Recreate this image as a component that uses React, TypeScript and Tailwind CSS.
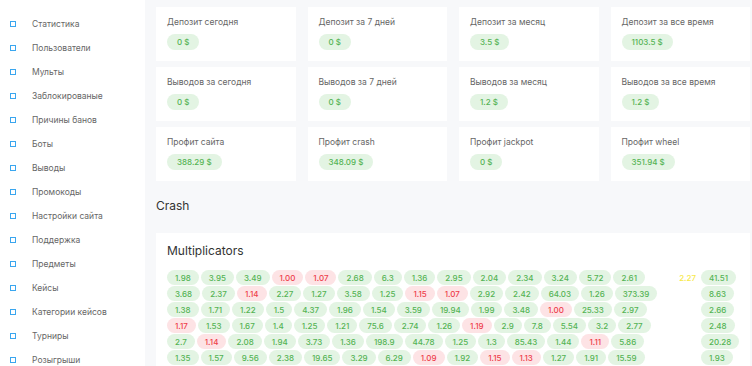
const menu = [
  "Статистика",
  "Пользователи",
  "Мульты",
  "Заблокированые",
  "Причины банов",
  "Боты",
  "Выводы",
  "Промокоды",
  "Настройки сайта",
  "Поддержка",
  "Предметы",
  "Кейсы",
  "Категории кейсов",
  "Турниры",
  "Розыгрыши",
];

const stats = [
  { label: "Депозит сегодня", value: "0 $" },
  { label: "Депозит за 7 дней", value: "0 $" },
  { label: "Депозит за месяц", value: "3.5 $" },
  { label: "Депозит за все время", value: "1103.5 $" },
  { label: "Выводов за сегодня", value: "0 $" },
  { label: "Выводов за 7 дней", value: "0 $" },
  { label: "Выводов за месяц", value: "1.2 $" },
  { label: "Выводов за все время", value: "1.2 $" },
  { label: "Профит сайта", value: "388.29 $" },
  { label: "Профит crash", value: "348.09 $" },
  { label: "Профит jackpot", value: "0 $" },
  { label: "Профит wheel", value: "351.94 $" },
];

// строки множителей, последний элемент идёт в правую колонку
const rows: string[][] = [
  ["1.98", "3.95", "3.49", "1.00", "1.07", "2.68", "6.3", "1.36", "2.95", "2.04", "2.34", "3.24", "5.72", "2.61", "41.51"],
  ["3.68", "2.37", "1.14", "2.27", "1.27", "3.58", "1.25", "1.15", "1.07", "2.92", "2.42", "64.03", "1.26", "373.39", "8.63"],
  ["1.38", "1.71", "1.22", "1.5", "4.37", "1.96", "1.54", "3.59", "19.94", "1.99", "3.48", "1.00", "25.33", "2.97", "2.66"],
  ["1.17", "1.53", "1.67", "1.4", "1.25", "1.21", "75.6", "2.74", "1.26", "1.19", "2.9", "7.8", "5.54", "3.2", "2.77", "2.48"],
  ["2.7", "1.14", "2.08", "1.94", "3.73", "1.36", "198.9", "44.78", "1.25", "1.3", "85.43", "1.44", "1.11", "5.86", "20.28"],
  ["1.35", "1.57", "9.56", "2.38", "19.65", "3.29", "6.29", "1.09", "1.92", "1.15", "1.13", "1.27", "1.91", "15.59", "1.93"],
];

function Badge({ value }: { value: string }) {
  const low = parseFloat(value) < 1.2;
  return (
    <span
      className={`h-[15px] px-[8px] rounded-full flex items-center text-[8px] font-medium leading-none ${
        low ? "bg-[#fde3e5] text-[#ee3d4b]" : "bg-[#e3f4e3] text-[#54b354]"
      }`}
    >
      {value}
    </span>
  );
}

export default function App() {
  return (
    <div className="flex h-screen overflow-hidden bg-[#f7f8fa] font-['Inter',sans-serif]">
      <aside className="w-[145px] shrink-0 bg-white pt-[12px]">
        {menu.map((item) => (
          <div key={item} className="flex items-center h-[24px] pl-[10px]">
            <span className="w-[6px] h-[6px] border-[1.5px] border-[#3aa6ef]"></span>
            <span className="ml-[16px] text-[8.5px] text-[#666]">{item}</span>
          </div>
        ))}
      </aside>

      <main className="flex-1 pl-[11px] pr-[2px] pt-[7px]">
        <div className="grid grid-cols-4 gap-x-[12px] gap-y-[6px]">
          {stats.map((s) => (
            <div key={s.label} className="bg-white h-[54px] px-[11px] pt-[10px]">
              <p className="text-[8.5px] text-[#666] leading-[10px]">{s.label}</p>
              <span className="mt-[7px] inline-flex items-center h-[16px] px-[10px] rounded-full bg-[#e3f4e3] text-[#54b354] text-[8px] font-medium">
                {s.value}
              </span>
            </div>
          ))}
        </div>

        <h2 className="mt-[17px] text-[12px] text-[#333] leading-[16px]">Crash</h2>

        <div className="mt-[19px] bg-white px-[11px] pt-[11px] pb-[10px]">
          <h3 className="text-[12px] text-[#333] leading-[14px]">Multiplicators</h3>
          <div className="mt-[12px] flex flex-col gap-[1px]">
            {rows.map((row, i) => (
              <div key={i} className="flex items-center">
                <div className="flex flex-1 gap-[2px]">
                  {row.slice(0, -1).map((v, j) => (
                    <Badge key={j} value={v} />
                  ))}
                </div>
                {i === 0 && <span className="mr-[5px] text-[8px] font-medium text-[#f7e94a]">2.27</span>}
                <div className="w-[38px] flex">
                  <Badge value={row[row.length - 1]} />
                </div>
              </div>
            ))}
          </div>
        </div>
      </main>
    </div>
  );
}
